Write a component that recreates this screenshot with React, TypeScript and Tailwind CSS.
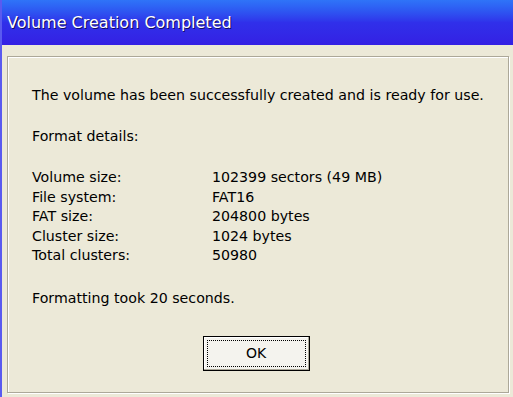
import React from 'react';

const rows: [string, string][] = [
  ['Volume size:', '102399 sectors (49 MB)'],
  ['File system:', 'FAT16'],
  ['FAT size:', '204800 bytes'],
  ['Cluster size:', '1024 bytes'],
  ['Total clusters:', '50980'],
];

export default function App() {
  return (
    <div
      className="w-[513px] h-[397px] flex flex-col bg-[#ece9d8] border-l-2 border-[#5a5af0] overflow-hidden text-[#000]"
      style={{ fontFamily: '"DejaVu Sans", Verdana, sans-serif' }}
    >
      {/* Title bar */}
      <div className="h-[45px] shrink-0 flex items-center pl-[5px] bg-gradient-to-b from-[#2f74f8] via-[#3030ea] to-[#3420e4]">
        <span className="text-white text-[16px] [text-shadow:1px_1px_0_#101060]">Volume Creation Completed</span>
      </div>

      {/* Body */}
      <div className="flex-1 pt-[11px] pl-[5px] pr-[4px] pb-[4px] flex">
        <div className="flex-1 border border-[#aca899] shadow-[inset_1px_1px_0_#fff,1px_1px_0_#fff] flex flex-col pl-[24px] pt-[29px] text-[14.2px] leading-[19.5px]">
          <p>The volume has been successfully created and is ready for use.</p>
          <p className="mt-[21px]">Format details:</p>
          <div className="mt-[22px] grid grid-cols-[180px_1fr]">
            {rows.map(([k, v]) => (
              <React.Fragment key={k}>
                <span>{k}</span>
                <span>{v}</span>
              </React.Fragment>
            ))}
          </div>
          <p className="mt-[23px]">Formatting took 20 seconds.</p>
          <div className="mt-[28px] flex justify-center pr-[28px]">
            <button className="w-[107px] h-[35px] border border-[#000] bg-[#f4f3ee] shadow-[inset_-1px_-1px_0_#aca899,inset_1px_1px_0_#fff] p-[3px] flex">
              <span className="flex-1 border border-dotted border-[#000] flex items-center justify-center text-[14px]">OK</span>
            </button>
          </div>
        </div>
      </div>
    </div>
  );
}
